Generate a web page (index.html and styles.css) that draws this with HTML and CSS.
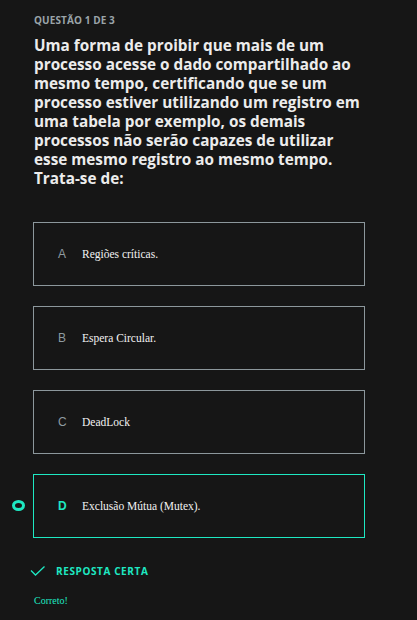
FILE: index.html
```html
<!DOCTYPE html>
<html lang="pt-BR">
<head>
<meta charset="utf-8">
<link rel="stylesheet" href="styles.css">
</head>
<body>
<main class="quiz">
  <p class="counter">QUESTÃO 1 DE 3</p>
  <h1 class="question">Uma forma de proibir que mais de um processo acesse o dado compartilhado ao mesmo tempo, certificando que se um processo estiver utilizando um registro em uma tabela por exemplo, os demais processos não serão capazes de utilizar esse mesmo registro ao mesmo tempo. Trata-se de:</h1>
  <ul class="options">
    <li class="option"><span class="letter">A</span><span class="text">Regiões críticas.</span></li>
    <li class="option"><span class="letter">B</span><span class="text">Espera Circular.</span></li>
    <li class="option"><span class="letter">C</span><span class="text">DeadLock</span></li>
    <li class="option selected"><span class="marker"></span><span class="letter">D</span><span class="text">Exclusão Mútua (Mutex).</span></li>
  </ul>
  <div class="result">
    <svg class="check" width="16" height="10" viewBox="0 0 16 10"><path d="M1 4.5 L5.5 9 L14.5 0.5" fill="none" stroke="#1ee8c2" stroke-width="1.3"/></svg>
    <span class="result-label">RESPOSTA CERTA</span>
  </div>
  <p class="feedback">Correto!</p>
</main>
</body>
</html>
```
FILE: styles.css
```css
html, body {
  margin: 0;
  padding: 0;
  background: #161616;
}
.quiz {
  padding: 13px 33px 0 34px;
  font-family: "Open Sans", "Inter", sans-serif;
}
.counter {
  margin: 0;
  font-size: 10px;
  line-height: 14px;
  font-weight: 700;
  color: #9aa4a9;
  letter-spacing: 0.1px;
}
.question {
  margin: 9px 0 0;
  font-size: 15.3px;
  line-height: 19px;
  font-weight: 700;
  color: #ececec;
  width: 332px;
}
.options {
  list-style: none;
  margin: 34px 0 0;
  padding: 0;
  width: 332px;
  margin-left: -1px;
  display: flex;
  flex-direction: column;
  gap: 20px;
}
.option {
  position: relative;
  height: 62px;
  border: 1px solid #8c979c;
  display: flex;
  align-items: center;
  padding-left: 24px;
}
.letter {
  width: 24px;
  font-family: "Liberation Sans", sans-serif;
  font-size: 12px;
  color: #8f9ba1;
}
.text {
  font-family: "Liberation Serif", serif;
  font-size: 11.5px;
  color: #f2f2f2;
}
.selected {
  border-color: #1ee8c2;
}
.selected .letter {
  color: #1ee8c2;
  font-weight: 700;
}
.marker {
  position: absolute;
  left: -22px;
  top: 50%;
  width: 7px;
  height: 5px;
  margin-top: -6px;
  border: 3px solid #1ee8c2;
  border-radius: 50%;
}
.result {
  margin-top: 26px;
  margin-left: -4px;
  display: flex;
  align-items: center;
  gap: 10px;
}
.result-label {
  font-size: 10px;
  font-weight: 700;
  letter-spacing: 0.6px;
  color: #1ee8c2;
}
.feedback {
  margin: 17px 0 0;
  font-family: "Liberation Serif", serif;
  font-size: 10px;
  color: #1ee8c2;
}
```
